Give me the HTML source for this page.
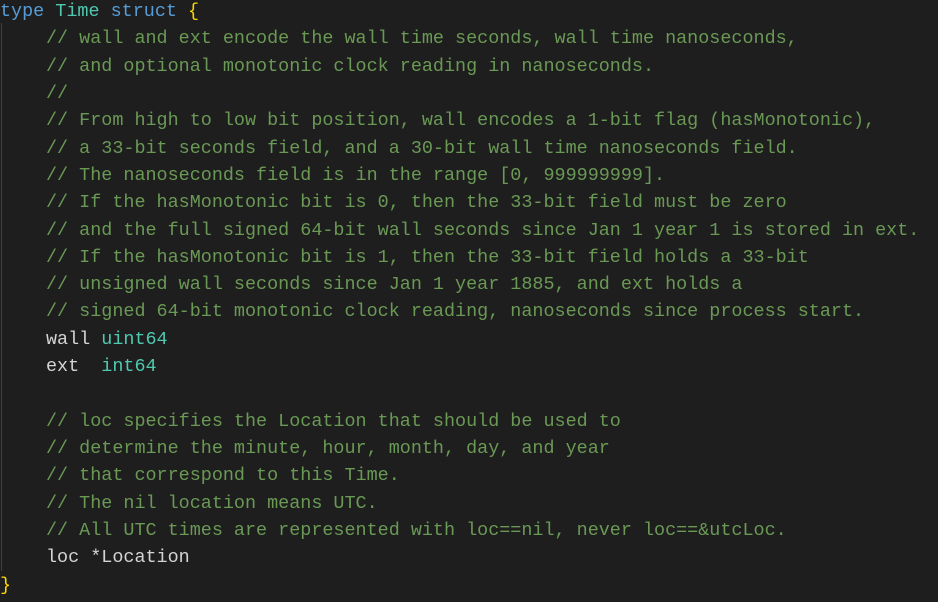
<!DOCTYPE html>
<html><head><meta charset="utf-8"><style>
html,body{margin:0;padding:0;background:#1e1e1e;width:938px;height:602px;overflow:hidden}
pre{margin:0;position:absolute;top:-2px;left:0;font-family:"Liberation Mono",monospace;font-size:18.43px;line-height:27.32px;color:#d4d4d4;white-space:pre}
.k{color:#569cd6}.t{color:#4ec9b0}.c{color:#6a9955}.b{color:#ffd700}
.g{position:absolute;left:1px;top:23px;width:1px;height:548px;background:#404040}
.i{display:inline-block;width:46px}
</style></head><body>
<div class="g"></div>
<pre><span class="k">type</span> <span class="t">Time</span> <span class="k">struct</span> <span class="b">{</span>
<span class="i"></span><span class="c">// wall and ext encode the wall time seconds, wall time nanoseconds,</span>
<span class="i"></span><span class="c">// and optional monotonic clock reading in nanoseconds.</span>
<span class="i"></span><span class="c">//</span>
<span class="i"></span><span class="c">// From high to low bit position, wall encodes a 1-bit flag (hasMonotonic),</span>
<span class="i"></span><span class="c">// a 33-bit seconds field, and a 30-bit wall time nanoseconds field.</span>
<span class="i"></span><span class="c">// The nanoseconds field is in the range [0, 999999999].</span>
<span class="i"></span><span class="c">// If the hasMonotonic bit is 0, then the 33-bit field must be zero</span>
<span class="i"></span><span class="c">// and the full signed 64-bit wall seconds since Jan 1 year 1 is stored in ext.</span>
<span class="i"></span><span class="c">// If the hasMonotonic bit is 1, then the 33-bit field holds a 33-bit</span>
<span class="i"></span><span class="c">// unsigned wall seconds since Jan 1 year 1885, and ext holds a</span>
<span class="i"></span><span class="c">// signed 64-bit monotonic clock reading, nanoseconds since process start.</span>
<span class="i"></span>wall <span class="t">uint64</span>
<span class="i"></span>ext  <span class="t">int64</span>

<span class="i"></span><span class="c">// loc specifies the Location that should be used to</span>
<span class="i"></span><span class="c">// determine the minute, hour, month, day, and year</span>
<span class="i"></span><span class="c">// that correspond to this Time.</span>
<span class="i"></span><span class="c">// The nil location means UTC.</span>
<span class="i"></span><span class="c">// All UTC times are represented with loc==nil, never loc==&amp;utcLoc.</span>
<span class="i"></span>loc *Location
<span class="b">}</span></pre>
</body></html>
